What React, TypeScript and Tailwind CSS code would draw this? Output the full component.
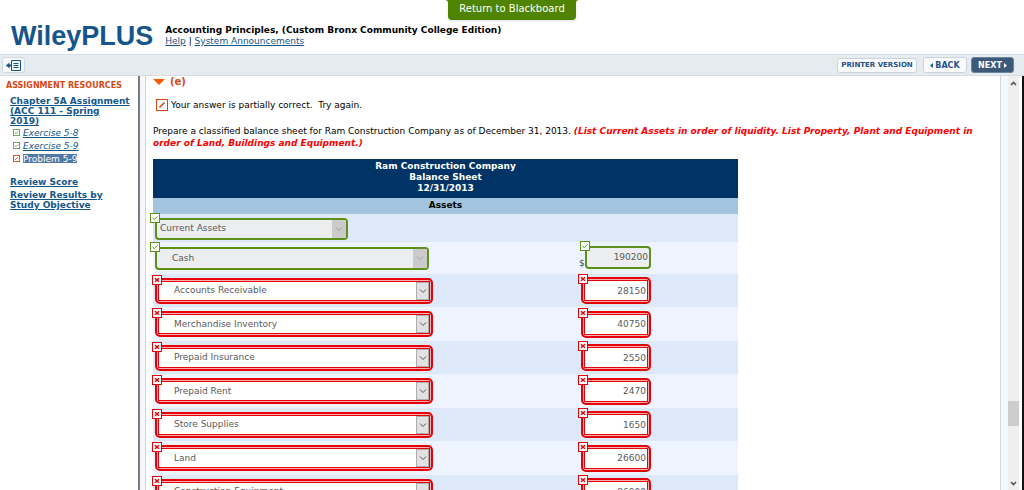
import React from 'react';

const accounts = [
  { name: 'Accounts Receivable', amount: '28150' },
  { name: 'Merchandise Inventory', amount: '40750' },
  { name: 'Prepaid Insurance', amount: '2550' },
  { name: 'Prepaid Rent', amount: '2470' },
  { name: 'Store Supplies', amount: '1650' },
  { name: 'Land', amount: '26600' },
  { name: 'Construction Equipment', amount: '86000' },
];

const resources = [
  { title: 'Exercise 5-8', done: true },
  { title: 'Exercise 5-9', done: true },
  { title: 'Problem 5-9', done: false },
];

const Badge = ({ correct }: { correct: boolean }) => (
  <svg
    viewBox="0 0 10 10"
    className={
      correct
        ? 'absolute -left-[5px] -top-[5px] z-10 size-[10px] text-[#5c9018]'
        : 'absolute -left-[3px] -top-[3px] z-10 size-[10px] text-[#e60008]'
    }
    fill="none"
    stroke="currentColor"
    aria-hidden="true"
  >
    <rect x="0.5" y="0.5" width="9" height="9" fill="white" />
    {correct ? <path d="M2.5 5 4.2 6.5 7.5 3.5" /> : <path d="M3 3.2 7 6.8M7 3.2 3 6.8" strokeWidth="1.5" />}
  </svg>
);

// Green solid frame for correct answers, red double frame for wrong ones
const Frame = ({ correct, className, children }: { correct: boolean; className: string; children: React.ReactNode }) => (
  <div className={`relative ${className}`}>
    <Badge correct={correct} />
    {correct ? (
      <div className="relative rounded-[4px] border-2 border-[#5c9018] bg-[#ebedee]">{children}</div>
    ) : (
      <div className="rounded-[5px] border-2 border-[#e60008] bg-[#f6b0b4] p-px">
        <div className="border border-[#e60008] bg-white">
          <div className="relative">{children}</div>
        </div>
      </div>
    )}
  </div>
);

const Arrow = ({ correct }: { correct: boolean }) => (
  <span
    className={
      correct
        ? 'pointer-events-none absolute inset-y-0 right-0 flex w-[14px] items-center justify-center bg-[#cbcbcb] text-[#a0a0a0]'
        : 'pointer-events-none absolute inset-y-0 right-0 flex w-[13px] items-center justify-center border border-[#adadad] bg-[#e1e1e1] text-[#555555]'
    }
  >
    <svg viewBox="0 0 8 6" className="h-[6px] w-[8px]" fill="none" stroke="currentColor" aria-hidden="true">
      <path d="M1 1.5 4 4.5 7 1.5" />
    </svg>
  </span>
);

const AccountSelect = ({ value, correct, className }: { value: string; correct: boolean; className: string }) => (
  <>
    <select
      aria-label={`Account: ${value}`}
      defaultValue={value}
      disabled={correct}
      className={`block w-full appearance-none text-[#5a5a5a] opacity-100 outline-none ${className}`}
    >
      <option>{value}</option>
      <option>Accounts Payable</option>
      <option>Notes Payable</option>
    </select>
    <Arrow correct={correct} />
  </>
);

const Sidebar = () => (
  <aside className="w-[138px] shrink-0 pl-[6px] pt-[5px] font-bold">
    <h2 className="text-[8px] leading-[10px] whitespace-nowrap text-[#d9480f]">ASSIGNMENT RESOURCES</h2>
    <div className="pl-1 pr-1 pt-[5px] text-[9px] leading-[10px] text-[#14568c]">
      <a href="#chapter" className="underline">
        Chapter 5A Assignment (ACC 111 - Spring
        <br />
        2019)
      </a>
      <ul className="font-normal">
        {resources.map((item) => (
          <li key={item.title} className="flex h-[13px] items-center gap-[3px] pl-[3px]">
            <svg
              viewBox="0 0 8 8"
              className={item.done ? 'size-[7px] text-[#5f9f4a]' : 'size-[7px] text-[#d9480f]'}
              fill="none"
              stroke="currentColor"
              aria-hidden="true"
            >
              <rect x="0.5" y="0.5" width="7" height="7" />
              <path d={item.done ? 'M2 4 3.5 5.3 6 2.8' : 'M2.3 5.7 5.7 2.3'} />
            </svg>
            <a
              href="#exercise"
              className={item.done ? 'italic underline' : 'bg-[#4f78a6] text-white underline'}
            >
              {item.title}
            </a>
          </li>
        ))}
      </ul>
      <div className="flex flex-col gap-[3px] pr-4 pt-3">
        <a href="#score" className="underline">
          Review Score
        </a>
        <a href="#results" className="underline">
          Review Results by Study Objective
        </a>
      </div>
    </div>
  </aside>
);

const BalanceSheet = () => (
  <table className="mt-[10px] w-[585px] table-fixed border-collapse text-[9px]">
    <colgroup>
      <col className="w-[426px]" />
      <col />
    </colgroup>
    <thead>
      <tr className="h-[39px] bg-[#003366] text-white">
        <th colSpan={2} className="p-0 pb-[2px] leading-[11px]">
          Ram Construction Company
          <br />
          Balance Sheet
          <br />
          12/31/2013
        </th>
      </tr>
      <tr className="h-4 bg-[#a2c4de]">
        <th colSpan={2} className="p-0 pb-[2px] leading-[11px]">
          Assets
        </th>
      </tr>
    </thead>
    <tbody>
      <tr className="h-7 bg-[#dde9f9]">
        <td className="p-0 pl-[2px] pt-px">
          <Frame correct className="w-[193px]">
            <AccountSelect value="Current Assets" correct className="h-[18px] pl-[3px]" />
          </Frame>
        </td>
        <td />
      </tr>
      <tr className="h-8 bg-[#edf4ff]">
        <td className="p-0 pl-[2px]">
          <Frame correct className="w-[274px]">
            <AccountSelect value="Cash" correct className="h-[19px] pl-[15px]" />
          </Frame>
        </td>
        <td className="p-0">
          <div className="flex items-end pb-[2px]">
            <span className="w-[6px] text-[#444444]">$</span>
            <Frame correct className="w-[66px]">
              <input
                aria-label="Cash amount"
                defaultValue="190200"
                disabled
                className="block h-[19px] w-full pr-[1px] text-right text-[#5a5a5a] outline-none"
              />
            </Frame>
          </div>
        </td>
      </tr>
      {accounts.map((account) => (
        <tr key={account.name} className="h-[33px] odd:bg-[#dde9f9] even:h-[34px] even:bg-[#edf4ff]">
          <td className="p-0 pl-[2px]">
            <Frame correct={false} className="w-[278px]">
              <AccountSelect value={account.name} correct={false} className="h-[18px] pl-[15px]" />
            </Frame>
          </td>
          <td className="p-0 pl-[2px]">
            <Frame correct={false} className="w-[70px]">
              <input
                aria-label={`${account.name} amount`}
                defaultValue={account.amount}
                className="block h-[19px] w-full pr-[1px] text-right text-[#5a5a5a] outline-none"
              />
            </Frame>
          </td>
        </tr>
      ))}
    </tbody>
  </table>
);

const Scrollbar = () => (
  <div className="flex w-[11px] shrink-0 flex-col items-center bg-[#efefef] text-[#555555]" aria-hidden="true">
    <svg viewBox="0 0 7 5" className="mt-[5px] h-[5px] w-[7px]" fill="none" stroke="currentColor" strokeWidth="1.6">
      <path d="M1 4 3.5 1.5 6 4" />
    </svg>
    <div className="grow-[319]" />
    <div className="h-[25px] w-full bg-[#cdcdcd]" />
    <div className="grow-[56]" />
    <svg viewBox="0 0 7 5" className="mb-[4px] h-[5px] w-[7px]" fill="none" stroke="currentColor" strokeWidth="1.6">
      <path d="M1 1 3.5 3.5 6 1" />
    </svg>
  </div>
);

const App = () => (
  <div className="flex h-screen flex-col overflow-hidden bg-white font-['DejaVu_Sans','Liberation_Sans',sans-serif] text-[10px] leading-[11px] text-black">
    <header className="relative flex h-[54px] shrink-0 items-end gap-3 pl-[11px]">
      <div className="pb-[3px] font-['Liberation_Sans',sans-serif] text-[27px] leading-[30px] font-bold text-[#14568c]">
        WileyPLUS
      </div>
      <div className="pb-[7px]">
        <h1 className="text-[9px] font-bold">Accounting Principles, (Custom Bronx Community College Edition)</h1>
        <p className="text-[9px]">
          <a href="#help" className="text-[#14568c] underline">
            Help
          </a>
          {' | '}
          <a href="#announcements" className="text-[#14568c] underline">
            System Announcements
          </a>
        </p>
      </div>
      <button className="absolute left-1/2 top-0 h-5 w-[128px] -translate-x-1/2 rounded-b-[4px] bg-[#4e8400] pb-[3px] text-white shadow-sm">
        <svg
          viewBox="0 0 134 3"
          className="absolute -left-[3px] top-0 h-[3px] w-[134px]"
          fill="#4e8400"
          aria-hidden="true"
        >
          <path d="M0 0h3v3Q3 0 0 0zM134 0h-3v3q0-3 3-3z" />
        </svg>
        Return to Blackboard
      </button>
    </header>

    <div className="flex h-[22px] shrink-0 items-center gap-1 border-y border-[#d6dde6] bg-[#e6ebf0] pl-[2px] pr-[10px] font-bold">
      <button
        aria-label="Hide menu"
        className="mr-auto flex h-4 w-[23px] items-center justify-center rounded-[3px] border border-[#cfd9e4] bg-[#f7f9fb] text-[#14568c]"
      >
        <svg viewBox="0 0 15 11" className="h-[11px] w-[15px]" fill="none" stroke="currentColor">
          <path d="M5.5 0.5h9v10h-9zM7.5 3.5h5M7.5 5.5h5M7.5 7.5h5" />
          <path d="M6 5.5H2" strokeWidth="2" />
          <path d="M0 5.5 3.5 2.5v6z" fill="currentColor" stroke="none" />
        </svg>
      </button>
      <button className="h-[15px] w-20 rounded-[3px] border border-[#c9d4e0] bg-[#f9fafc] text-[7px] leading-[8px] whitespace-nowrap text-[#23528c]">
        PRINTER VERSION
      </button>
      <button className="ml-[2px] flex h-4 w-11 items-center justify-center gap-[2px] rounded-[3px] border border-[#c9d4e0] bg-[#f9fafc] text-[8px] text-[#23528c]">
        <svg viewBox="0 0 3 5" className="h-[5px] w-[3px]" fill="currentColor" aria-hidden="true">
          <path d="M3 0v5L0 2.5z" />
        </svg>
        BACK
      </button>
      <button className="flex h-4 w-[43px] items-center justify-center gap-[2px] rounded-[3px] border border-[#6d869d] bg-[#3c5a78] text-[8px] text-white">
        NEXT
        <svg viewBox="0 0 3 5" className="h-[5px] w-[3px]" fill="currentColor" aria-hidden="true">
          <path d="M0 0v5l3-2.5z" />
        </svg>
      </button>
    </div>

    <div className="flex min-h-0 flex-1">
      <Sidebar />
      <div className="w-[2px] shrink-0 bg-[#7b7b7b]" />
      <div className="flex min-w-0 flex-1 bg-[#f4f8fc] pl-[5px]">
        <main className="min-w-0 flex-1 overflow-hidden border-x border-[#cdd8e4] bg-white pl-[7px] pr-2">
          <div className="flex items-center gap-[5px] font-bold text-[#d9480f]">
            <svg viewBox="0 0 12 6" className="h-[6px] w-[12px] text-[#ff5a00]" fill="currentColor" aria-hidden="true">
              <path d="M0 0h12L6 6z" />
            </svg>
            (e)
          </div>
          <div className="flex items-center gap-[3px] pl-[3px] pt-3">
            <svg viewBox="0 0 12 12" className="size-3 text-[#d9480f]" fill="none" stroke="currentColor" aria-hidden="true">
              <rect x="0.5" y="0.5" width="11" height="11" />
              <path d="M3.5 8.5 8.5 3.5" strokeWidth="1.6" />
            </svg>
            <p className="text-[9px] whitespace-pre">Your answer is partially correct.  Try again.</p>
          </div>
          <p className="pt-[14px] text-[9px] leading-3">
            Prepare a classified balance sheet for Ram Construction Company as of December 31, 2013.{' '}
            <strong className="text-[#ff0000] italic">
              (List Current Assets in order of liquidity. List Property, Plant and Equipment in order of Land, Buildings
              and Equipment.)
            </strong>
          </p>
          <BalanceSheet />
        </main>
        <div className="w-[7px] shrink-0" />
      </div>
      <Scrollbar />
      <div className="w-[5px] shrink-0 border-r-2 border-[#111111]" />
    </div>
  </div>
);

export default App;
